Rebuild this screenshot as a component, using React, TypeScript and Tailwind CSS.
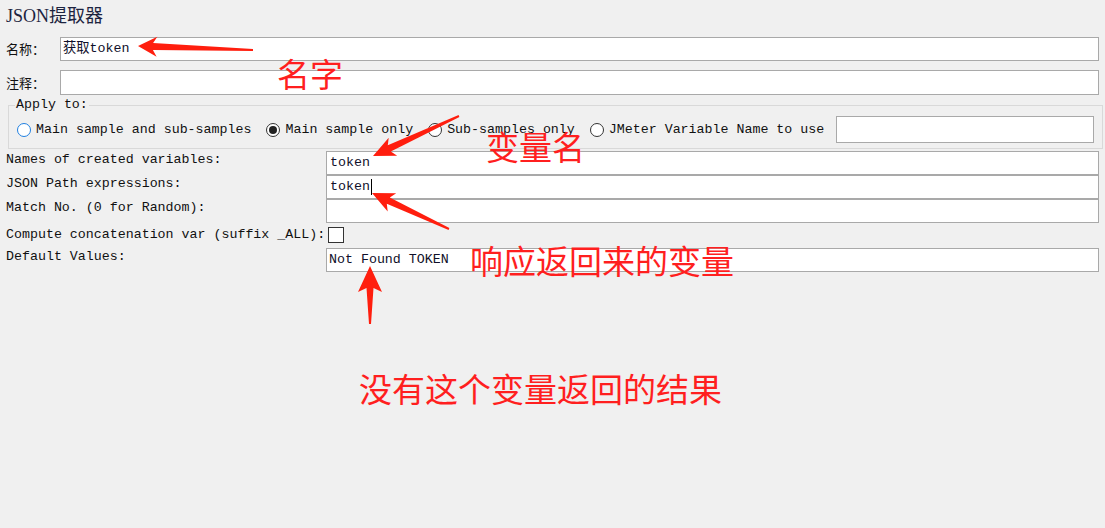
import React from "react";

const mono = "font-['Liberation_Mono','Noto_Sans_CJK_SC',monospace]";

type Pt = [number, number];

// polygon for a hand-drawn style callout arrow, tail -> tip
function arrowPoints(
  tail: Pt,
  tip: Pt,
  head = 20,
  hw = 10,
  neck = 3.5,
  end = 1
): string {
  const dx = tip[0] - tail[0];
  const dy = tip[1] - tail[1];
  const len = Math.hypot(dx, dy);
  const ux = dx / len;
  const uy = dy / len;
  const px = -uy;
  const py = ux;
  const base: Pt = [tip[0] - ux * head, tip[1] - uy * head];
  const nk: Pt = [tip[0] - ux * (head - 4), tip[1] - uy * (head - 4)];
  const pts: Pt[] = [
    [tail[0] + px * end, tail[1] + py * end],
    [nk[0] + px * neck, nk[1] + py * neck],
    [base[0] + px * hw, base[1] + py * hw],
    tip,
    [base[0] - px * hw, base[1] - py * hw],
    [nk[0] - px * neck, nk[1] - py * neck],
    [tail[0] - px * end, tail[1] - py * end],
  ];
  return pts.map((p) => `${p[0].toFixed(1)},${p[1].toFixed(1)}`).join(" ");
}

const arrows: { tail: Pt; tip: Pt; head?: number; hw?: number }[] = [
  { tail: [253, 50], tip: [138, 46], head: 19, hw: 10 },
  { tail: [459, 116], tip: [373, 156], head: 22, hw: 10 },
  { tail: [449, 229], tip: [372, 193], head: 22, hw: 10 },
  { tail: [370, 324], tip: [370, 266], head: 26, hw: 12 },
];

const notes: { text: string; x: number; y: number }[] = [
  { text: "名字", x: 277, y: 57 },
  { text: "变量名", x: 486, y: 130 },
  { text: "响应返回来的变量", x: 470, y: 244 },
  { text: "没有这个变量返回的结果", x: 359, y: 372 },
];

const Field: React.FC<{ value?: string; caret?: boolean; className?: string }> = ({
  value,
  caret,
  className = "",
}) => (
  <div
    className={`flex items-center bg-white border border-[#a9a9a9] px-[2px] text-[13.3px] text-[#10102a] ${mono} ${className}`}
  >
    <span className="whitespace-pre">{value}</span>
    {caret && <span className="ml-[1px] w-px h-[16px] bg-black" />}
  </div>
);

const Radio: React.FC<{ label: string; checked?: boolean; focus?: boolean }> = ({
  label,
  checked,
  focus,
}) => (
  <div className="flex items-center">
    <span
      className={`flex items-center justify-center w-[14px] h-[14px] rounded-full bg-white border ${
        focus ? "border-[#1f7fe0]" : "border-[#333]"
      }`}
    >
      {checked && <span className="w-[8px] h-[8px] rounded-full bg-[#222]" />}
    </span>
    <span className="ml-[5px] whitespace-pre">{label}</span>
  </div>
);

const rows: { label: string; value?: string; caret?: boolean }[] = [
  { label: "Names of created variables:", value: "token" },
  { label: "JSON Path expressions:", value: "token", caret: true },
  { label: "Match No. (0 for Random):" },
];

export default function App() {
  return (
    <div className={`relative w-[1105px] h-[528px] bg-[#f0f0f0] text-[#111] text-[13.3px] overflow-hidden ${mono}`}>
      <div className="pl-[6px] pt-[4px] h-[37px] text-[18px] leading-[24px] text-[#1c2440] font-['Liberation_Serif','Noto_Sans_CJK_SC',serif]">
        JSON提取器
      </div>

      <div className="flex items-center h-[24px] pr-[6px] text-[13px]">
        <span className="w-[60px] shrink-0 pl-[6px] font-['Noto_Sans_CJK_SC',sans-serif]">名称：</span>
        <Field value="获取token" className="flex-1 h-[24px]" />
      </div>
      <div className="flex items-center h-[25px] mt-[9px] pr-[6px] text-[13px]">
        <span className="w-[60px] shrink-0 pl-[6px] font-['Noto_Sans_CJK_SC',sans-serif]">注释：</span>
        <Field className="flex-1 h-[25px]" />
      </div>

      <fieldset className="mx-[8px] mt-[3px] h-[51px] border border-[#d9d9d9] px-[8px]">
        <legend className="px-[1px] ml-[-2px] leading-[14px]">Apply to:</legend>
        <div className="flex items-center gap-[15px] mt-[4px]">
          <Radio label="Main sample and sub-samples" focus />
          <Radio label="Main sample only" checked />
          <Radio label="Sub-samples only" />
          <div className="flex items-center">
            <Radio label="JMeter Variable Name to use" />
            <Field className="ml-[12px] w-[258px] h-[27px]" />
          </div>
        </div>
      </fieldset>

      <div className="mt-[2px] pr-[6px]">
        {rows.map((r) => (
          <div key={r.label} className="flex h-[24px]">
            <span className="w-[326px] shrink-0 pl-[6px] pt-[1px] leading-[16px] whitespace-pre">{r.label}</span>
            <Field value={r.value} caret={r.caret} className="flex-1 h-[24px] pl-[3px]" />
          </div>
        ))}
        <div className="flex items-start h-[25px] pt-[4px]">
          <span className="pl-[6px] leading-[16px] whitespace-pre">Compute concatenation var (suffix _ALL):</span>
          <span className="ml-[3px] w-[16px] h-[16px] bg-white border border-[#333]" />
        </div>
        <div className="flex h-[24px]">
          <span className="w-[326px] shrink-0 pl-[6px] pt-[1px] leading-[16px]">Default Values:</span>
          <Field value="Not Found TOKEN" className="flex-1 h-[24px]" />
        </div>
      </div>

      <svg className="absolute inset-0 pointer-events-none" width="1105" height="528">
        {arrows.map((a, i) => (
          <polygon key={i} points={arrowPoints(a.tail, a.tip, a.head, a.hw)} fill="#ff1e0e" />
        ))}
      </svg>

      {notes.map((n) => (
        <span
          key={n.text}
          className="absolute text-[33px] leading-none text-[#ff1f1f] whitespace-nowrap font-['Noto_Sans_CJK_SC',sans-serif]"
          style={{ left: n.x, top: n.y }}
        >
          {n.text}
        </span>
      ))}
    </div>
  );
}
